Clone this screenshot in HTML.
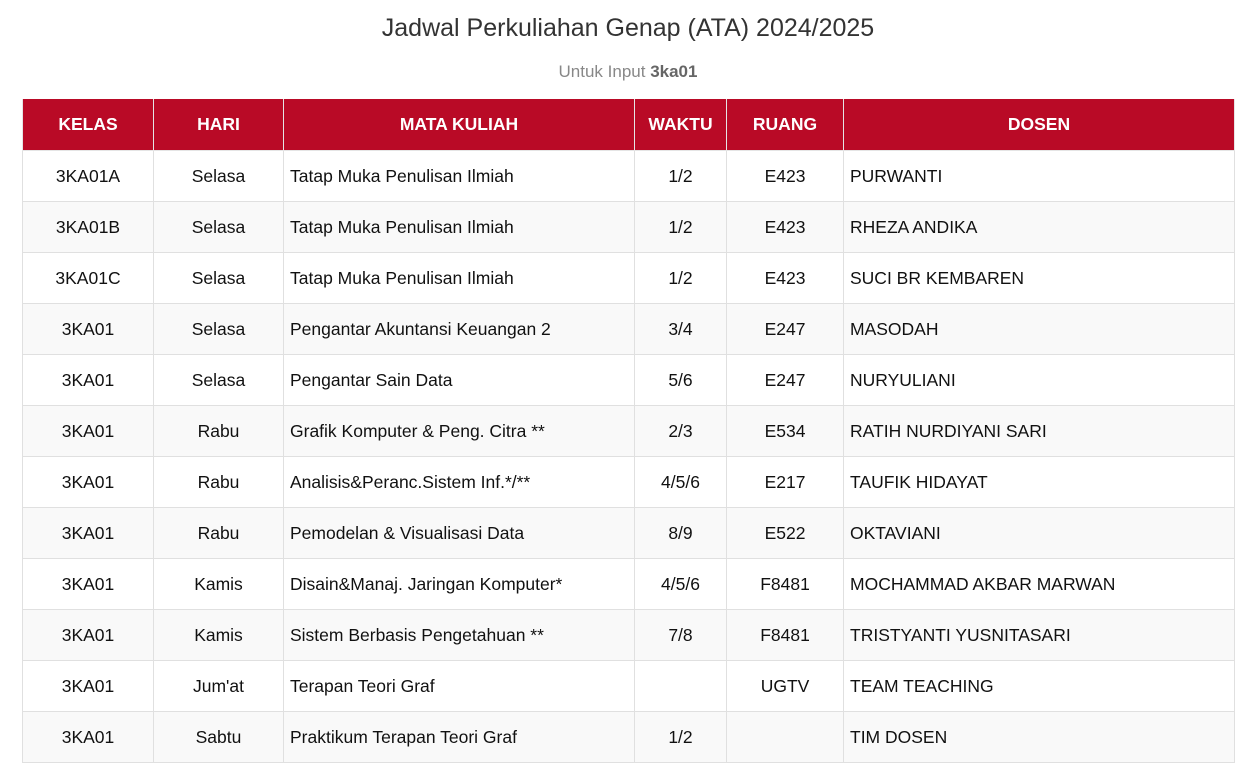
<!DOCTYPE html>
<html><head><meta charset="utf-8"><style>
body{margin:0;background:#fff;font-family:"Liberation Sans",Arial,sans-serif;color:#111;}
h1{position:absolute;top:13px;left:0;width:1256px;text-align:center;margin:0;font-weight:normal;font-size:25px;color:#333;line-height:30px;}
.sub{position:absolute;top:62px;left:0;width:1256px;text-align:center;font-size:17px;color:#888;line-height:20px;}
.sub b{color:#666;}
table{position:absolute;top:99px;left:22px;width:1212px;border-collapse:collapse;font-size:17.5px;table-layout:fixed;}
th{background:#b90a26;color:#fff;font-weight:bold;height:51px;border:1px solid #e5e5e5;border-top:none;padding:0;font-size:17.5px;}
td{height:50px;border:1px solid #e0e0e0;padding:0 6px;text-align:center;}
td.l{text-align:left;}
tr:nth-child(even) td{background:#f9f9f9;}
</style></head><body>
<h1>Jadwal Perkuliahan Genap (ATA) 2024/2025</h1>
<div class="sub">Untuk Input <b>3ka01</b></div>
<table>
<colgroup><col style="width:131px"><col style="width:130px"><col style="width:351px"><col style="width:92px"><col style="width:117px"><col style="width:391px"></colgroup>
<thead><tr><th>KELAS</th><th>HARI</th><th>MATA KULIAH</th><th>WAKTU</th><th>RUANG</th><th>DOSEN</th></tr></thead>
<tbody>
<tr><td>3KA01A</td><td>Selasa</td><td class="l">Tatap Muka Penulisan Ilmiah</td><td>1/2</td><td>E423</td><td class="l">PURWANTI</td></tr>
<tr><td>3KA01B</td><td>Selasa</td><td class="l">Tatap Muka Penulisan Ilmiah</td><td>1/2</td><td>E423</td><td class="l">RHEZA ANDIKA</td></tr>
<tr><td>3KA01C</td><td>Selasa</td><td class="l">Tatap Muka Penulisan Ilmiah</td><td>1/2</td><td>E423</td><td class="l">SUCI BR KEMBAREN</td></tr>
<tr><td>3KA01</td><td>Selasa</td><td class="l">Pengantar Akuntansi Keuangan 2</td><td>3/4</td><td>E247</td><td class="l">MASODAH</td></tr>
<tr><td>3KA01</td><td>Selasa</td><td class="l">Pengantar Sain Data</td><td>5/6</td><td>E247</td><td class="l">NURYULIANI</td></tr>
<tr><td>3KA01</td><td>Rabu</td><td class="l">Grafik Komputer &amp; Peng. Citra **</td><td>2/3</td><td>E534</td><td class="l">RATIH NURDIYANI SARI</td></tr>
<tr><td>3KA01</td><td>Rabu</td><td class="l">Analisis&amp;Peranc.Sistem Inf.*/**</td><td>4/5/6</td><td>E217</td><td class="l">TAUFIK HIDAYAT</td></tr>
<tr><td>3KA01</td><td>Rabu</td><td class="l">Pemodelan &amp; Visualisasi Data</td><td>8/9</td><td>E522</td><td class="l">OKTAVIANI</td></tr>
<tr><td>3KA01</td><td>Kamis</td><td class="l">Disain&amp;Manaj. Jaringan Komputer*</td><td>4/5/6</td><td>F8481</td><td class="l">MOCHAMMAD AKBAR MARWAN</td></tr>
<tr><td>3KA01</td><td>Kamis</td><td class="l">Sistem Berbasis Pengetahuan **</td><td>7/8</td><td>F8481</td><td class="l">TRISTYANTI YUSNITASARI</td></tr>
<tr><td>3KA01</td><td>Jum'at</td><td class="l">Terapan Teori Graf</td><td></td><td>UGTV</td><td class="l">TEAM TEACHING</td></tr>
<tr><td>3KA01</td><td>Sabtu</td><td class="l">Praktikum Terapan Teori Graf</td><td>1/2</td><td></td><td class="l">TIM DOSEN</td></tr>
</tbody></table>
</body></html>
